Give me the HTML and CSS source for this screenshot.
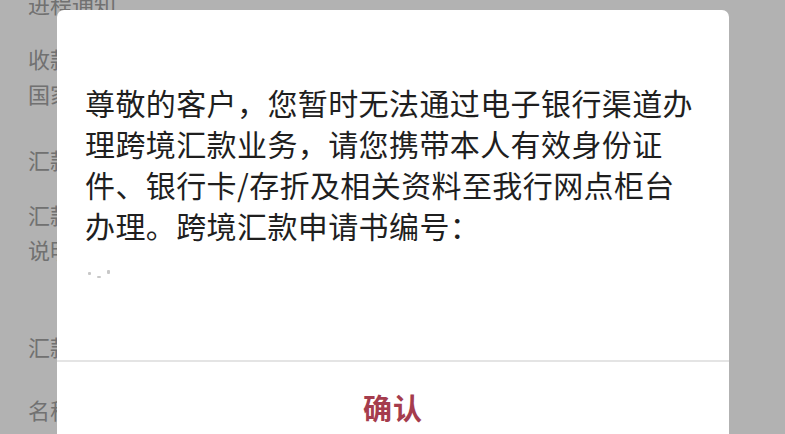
FILE: index.html
```html
<!DOCTYPE html>
<html lang="zh-CN">
<head>
<meta charset="utf-8">
<link rel="stylesheet" href="styles.css">
</head>
<body>
<div class="page">
  <div class="row">进程通知</div>
  <div class="row">收款人地址<br>国家/地区</div>
  <div class="row spaced">汇款金额</div>
  <div class="row">汇款附言<br>说明</div>
  <div class="row section">汇款人信息</div>
  <div class="row after-section">名称</div>
</div>
<div class="mask"></div>
<div class="dialog">
  <div class="dialog-body">
    <p class="msg">尊敬的客户，您暂时无法通过电子银行渠道办理跨境汇款业务，请您携带本人有效身份证件、银行卡/存折及相关资料至我行网点柜台办理。跨境汇款申请书编号：</p>
    <div class="redacted"><span class="dot d1"></span><span class="dot d2"></span><span class="dot d3"></span></div>
  </div>
  <div class="dialog-foot">
    <button class="confirm">确认</button>
  </div>
</div>
</body>
</html>
```

FILE: styles.css
```css
html, body {
  margin: 0;
  padding: 0;
  width: 785px;
  height: 434px;
  overflow: hidden;
  background: #ffffff;
  font-family: "Noto Sans CJK SC", "Noto Sans", sans-serif;
}

.page {
  display: flex;
  flex-direction: column;
  gap: 20px;
  padding-left: 28px;
  margin-top: -14px;
  color: #a2a2a2;
  font-size: 22px;
  line-height: 35px;
}

.row.spaced {
  margin-top: 11px;
}

.row.section {
  margin-top: 42px;
}

.row.after-section {
  margin-top: 8px;
}

.mask {
  position: fixed;
  inset: 0;
  background: rgba(0, 0, 0, 0.3);
}

.dialog {
  position: absolute;
  top: 10px;
  left: 57px;
  width: 672px;
  height: 460px;
  background: #ffffff;
  border-radius: 7px;
  display: flex;
  flex-direction: column;
}

.dialog-body {
  padding: 72px 28px 0 28px;
  height: 352px;
  box-sizing: border-box;
  border-bottom: 2px solid #e4e4e4;
}

.msg {
  margin: 0;
  font-size: 30px;
  line-height: 41px;
  letter-spacing: 0.4px;
  color: #1f1f1f;
  word-break: break-all;
}

.redacted {
  display: flex;
  gap: 6px;
  align-items: flex-end;
  height: 20px;
  padding-left: 3px;
  margin-top: 14px;
}

.dot {
  display: inline-block;
  background: #c8c8c8;
  border-radius: 1px;
}
.d1 { width: 3px; height: 3px; margin-bottom: 5px; }
.d2 { width: 4px; height: 2px; margin-bottom: 2px; }
.d3 { width: 3px; height: 4px; margin-bottom: 6px; }

.dialog-foot {
  height: 90px;
  display: flex;
  align-items: center;
  justify-content: center;
}

.confirm {
  border: none;
  background: transparent;
  padding: 0;
  font-family: "Noto Sans CJK SC", "Noto Sans", sans-serif;
  font-size: 29px;
  font-weight: bold;
  color: #a53c4d;
  letter-spacing: 1px;
}
```
